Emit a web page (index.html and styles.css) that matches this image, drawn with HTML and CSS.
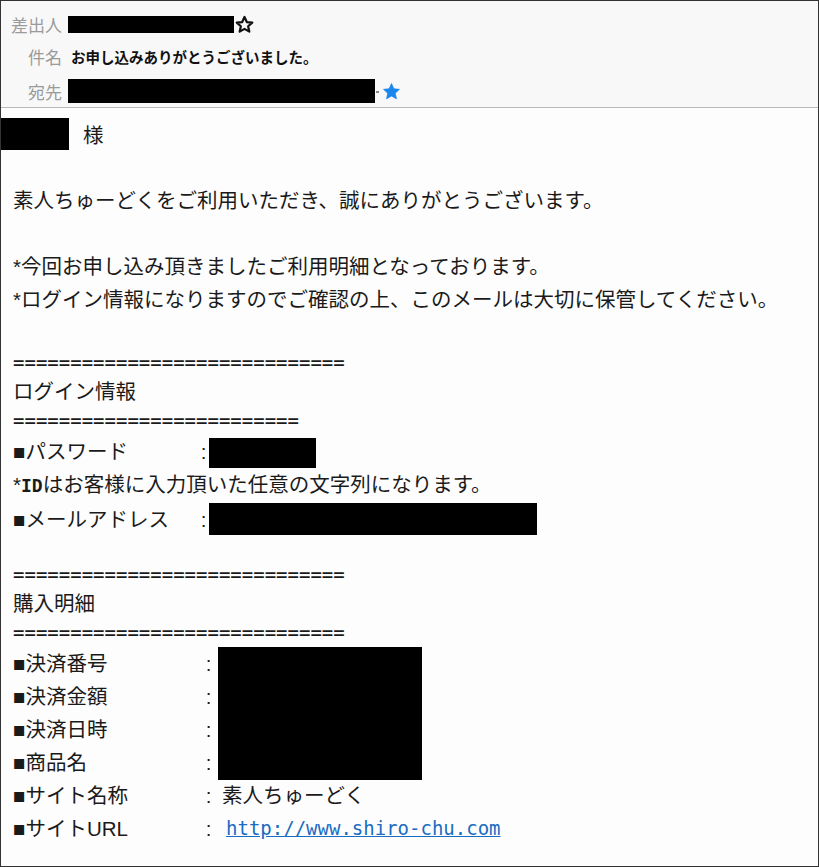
FILE: index.html
```html
<!DOCTYPE html>
<html lang="ja">
<head>
  <meta charset="UTF-8">
  <title>お申し込みありがとうございました。</title>
  <link rel="stylesheet" href="styles.css">
</head>
<body>
  <div class="mail">
    <div class="mail-head">
      <div class="head-row">
        <span class="head-label">差出人</span>
        <span class="redact redact-from"></span>
        <svg class="star" viewBox="0 0 24 24"><polygon points="12,2.5 14.9,8.9 21.8,9.6 16.6,14.2 18.1,21 12,17.5 5.9,21 7.4,14.2 2.2,9.6 9.1,8.9" fill="none" stroke="#111" stroke-width="2.8" stroke-linejoin="round"/></svg>
      </div>
      <div class="head-row">
        <span class="head-label">件名</span>
        <span class="subject">お申し込みありがとうございました。</span>
      </div>
      <div class="head-row head-row-to">
        <span class="head-label">宛先</span>
        <span class="redact redact-to"></span>
        <span class="dot"></span>
        <svg class="star star-blue" viewBox="0 0 24 24"><polygon points="12,2 14.9,8.6 22,9.3 16.7,14.1 18.2,21.2 12,17.6 5.8,21.2 7.3,14.1 2,9.3 9.1,8.6" fill="#1a86ee" stroke="#1a86ee" stroke-width="1" stroke-linejoin="round"/></svg>
      </div>
    </div>

    <div class="mail-body">
      <div class="salutation">
        <span class="redact redact-name"></span>
        <span>様</span>
      </div>

      <div class="line">素人ちゅーどくをご利用いただき、誠にありがとうございます。</div>
      <div class="blank"></div>
      <div class="line">*今回お申し込み頂きましたご利用明細となっております。</div>
      <div class="line">*ログイン情報になりますのでご確認の上、このメールは大切に保管してください。</div>
      <div class="blank blank-31"></div>

      <div class="rule">=============================</div>
      <div class="line line-29">ログイン情報</div>
      <div class="rule">=========================</div>
      <div class="field">
        <span class="field-label">■パスワード</span>
        <span class="colon">:</span>
        <span class="redact redact-pw"></span>
      </div>
      <div class="line">*<span class="mono-bold">ID</span>はお客様に入力頂いた任意の文字列になります。</div>
      <div class="field field-tall">
        <span class="field-label">■メールアドレス</span>
        <span class="colon">:</span>
        <span class="redact redact-mail"></span>
      </div>
      <div class="blank blank-22"></div>

      <div class="rule">=============================</div>
      <div class="line line-29">購入明細</div>
      <div class="rule">=============================</div>
      <div class="details">
        <span class="field-label">■決済番号</span><span class="colon">:</span>
        <span class="redact redact-order"></span>
        <span class="field-label">■決済金額</span><span class="colon">:</span>
        <span class="field-label">■決済日時</span><span class="colon">:</span>
        <span class="field-label">■商品名</span><span class="colon">:</span>
        <span class="field-label">■サイト名称</span><span class="colon">:</span>
        <span class="value value-site">素人ちゅーどく</span>
        <span class="field-label">■サイトURL</span><span class="colon">:</span>
        <a class="value value-url" href="http://www.shiro-chu.com">http://www.shiro-chu.com</a>
      </div>
    </div>
  </div>
</body>
</html>
```

FILE: styles.css
```css
body {
  margin: 0;
  background: #fff;
  color: #1a1a1a;
  font-family: "Liberation Sans", "Noto Sans CJK JP", sans-serif;
}

.mail {
  width: 819px;
  height: 867px;
  box-sizing: border-box;
  border: 1px solid #333;
  background: #fdfdfd;
  overflow: hidden;
}

/* header */

.mail-head {
  background: #f8f8f9;
  border-bottom: 1px solid #b7b7be;
  height: 99px;
  padding-top: 7px;
  font-family: "Noto Sans CJK JP", sans-serif;
}

.head-row {
  display: flex;
  align-items: center;
  height: 32px;
}

.head-row-to {
  margin-top: 3px;
}

.head-label {
  width: 53px;
  padding-left: 8px;
  text-align: right;
  font-size: 17px;
  color: #9a9a9a;
  margin-right: 6px;
}

.subject {
  margin-left: 3px;
  font-size: 14.5px;
  font-weight: bold;
  color: #111;
}

.redact {
  display: inline-block;
  background: #000;
}

.redact-from {
  width: 166px;
  height: 17px;
}

.redact-to {
  width: 307px;
  height: 24px;
}

.dot {
  width: 3px;
  height: 2px;
  background: #888;
  margin: 2px 2px 0 1px;
}

.star {
  width: 19px;
  height: 19px;
  margin-left: 1px;
}

.star-blue {
  width: 19px;
  height: 19px;
  margin-left: 1px;
}

/* body */

.mail-body {
  padding-left: 12px;
  font-size: 20.5px;
}

.salutation {
  display: flex;
  align-items: center;
  gap: 14px;
  height: 32px;
  margin: 10px 0 34px -13px;
}

.redact-name {
  width: 69px;
  height: 32px;
}

.line {
  height: 33px;
  line-height: 33px;
  white-space: nowrap;
}

.line-29 {
  height: 29px;
  line-height: 29px;
}

.blank {
  height: 33px;
}

.blank-31 {
  height: 32px;
}

.blank-22 {
  height: 23px;
}

.rule {
  height: 29px;
  line-height: 29px;
  font-family: "DejaVu Sans Mono", monospace;
  font-size: 19px;
}

.mono-bold {
  font-family: "DejaVu Sans Mono", monospace;
  font-weight: bold;
  font-size: 18px;
}

.field {
  display: flex;
  align-items: center;
  height: 33px;
  line-height: 33px;
}

.field-tall {
  height: 36px;
}

.field .field-label {
  width: 185px;
}

.colon {
  width: 11px;
  text-align: center;
}

.redact-pw {
  width: 107px;
  height: 30px;
  margin-top: 3px;
}

.redact-mail {
  width: 328px;
  height: 32px;
}

.details {
  display: grid;
  grid-template-columns: 190px 15px auto;
  grid-auto-rows: 33px;
  line-height: 33px;
  justify-items: start;
}

.details .colon {
  grid-column: 2;
}

.details .field-label {
  grid-column: 1;
}

.redact-order {
  grid-column: 3;
  grid-row: 1 / span 4;
  width: 204px;
  height: 133px;
}

.value {
  grid-column: 3;
}

.value-site {
  margin-left: 4px;
}

.value-url {
  margin-left: 8px;
  font-family: "DejaVu Sans Mono", monospace;
  font-size: 19px;
  color: #1a6cc2;
}
```
